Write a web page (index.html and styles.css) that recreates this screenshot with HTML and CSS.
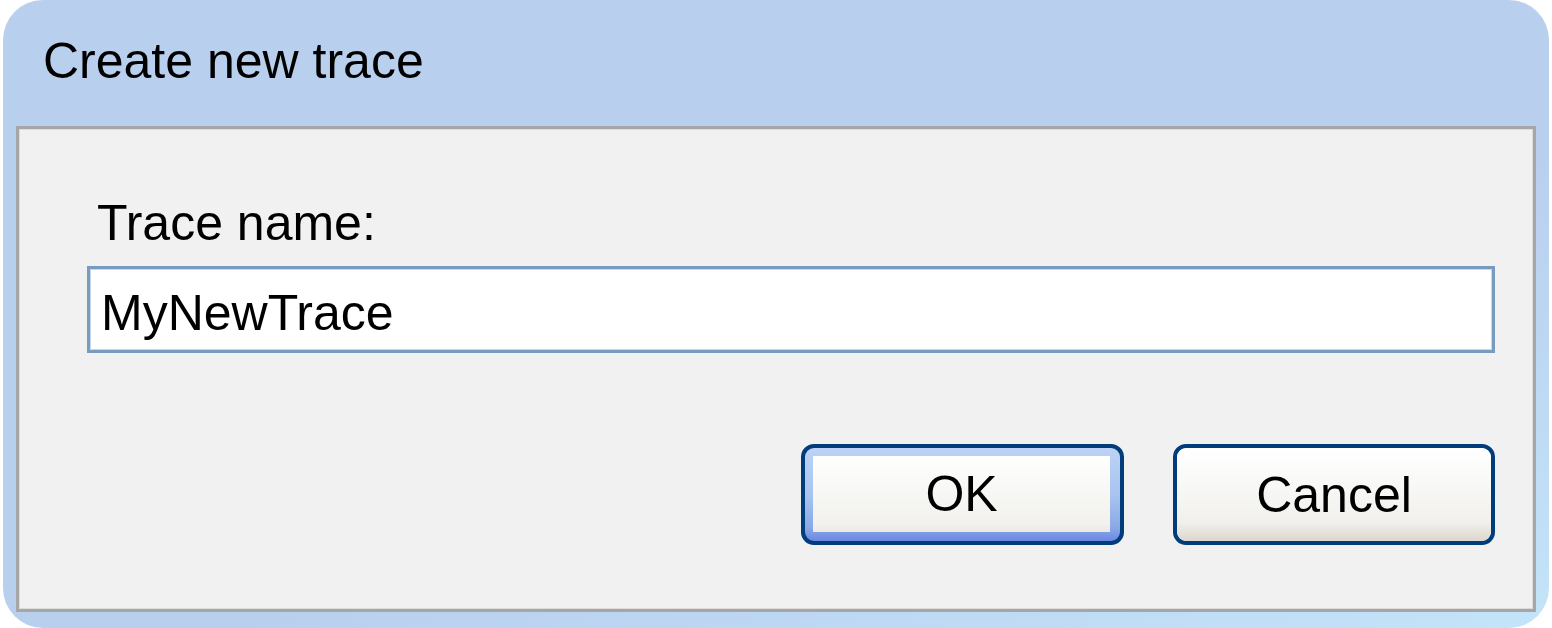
FILE: index.html
```html
<!DOCTYPE html>
<html>
<head>
<meta charset="utf-8">
<link rel="stylesheet" href="styles.css">
</head>
<body>
<div class="window">
  <div class="title">Create new trace</div>
  <div class="panel">
    <div class="content">
      <div class="label">Trace name:</div>
      <div class="input">MyNewTrace</div>
      <div class="buttons">
        <div class="btn btn-default"><span class="btn-face">OK</span></div>
        <div class="btn"><span class="btn-face">Cancel</span></div>
      </div>
    </div>
  </div>
</div>
</body>
</html>
```
FILE: styles.css
```css
html, body {
  margin: 0;
  padding: 0;
  background: #ffffff;
}
body {
  font-family: "Liberation Sans", Arial, sans-serif;
  color: #000;
}
.window {
  margin-left: 3px;
  width: 1546px;
  height: 628px;
  box-sizing: border-box;
  border-radius: 40px;
  background: linear-gradient(160deg, #b9cfee 0%, #b9cfee 60%, #c3e4f9 100%);
  display: flex;
  flex-direction: column;
  padding: 0 13px 16px 13px;
}
.title {
  height: 126px;
  box-sizing: border-box;
  padding: 34px 0 0 27px;
  font-size: 50px;
  line-height: 55px;
}
.panel {
  flex: 1;
  background: #f1f1f1;
  border: 3px solid #a6a6a6;
  box-shadow: inset 0 0 0 1px #dcdcdc;
  display: flex;
}
.content {
  margin-left: 68px;
  width: 1408px;
  display: flex;
  flex-direction: column;
  padding-top: 67px;
}
.label {
  font-size: 50px;
  line-height: 55px;
  padding-left: 10px;
}
.input {
  margin-top: 15px;
  height: 87px;
  box-sizing: border-box;
  background: #fff;
  border: 3px solid #789cc0;
  box-shadow: inset 0 0 0 1px #c9d8e8;
  font-size: 50px;
  line-height: 55px;
  padding: 17px 0 0 11px;
}
.buttons {
  margin-top: 91px;
  display: flex;
  justify-content: flex-end;
  gap: 49px;
}
.btn {
  width: 322px;
  height: 101px;
  box-sizing: border-box;
  border: 4px solid #003d7a;
  border-radius: 13px;
  background: #fff;
  display: flex;
  overflow: hidden;
}
.btn-face {
  flex: 1;
  display: flex;
  align-items: center;
  justify-content: center;
  font-size: 50px;
  background: linear-gradient(to bottom, #ffffff 0%, #f8f8f6 40%, #f1f0ec 80%, #ddd7cd 100%);
  border-radius: 9px;
}
.btn-default {
  width: 323px;
  padding: 8px 10px 9px 8px;
  background: linear-gradient(to bottom, #bcd3f4 0%, #a9c4f0 50%, #8aaae6 85%, #6c87e4 100%);
}
.btn-default .btn-face {
  border-radius: 0;
  background: linear-gradient(to bottom, #ffffff 0%, #f8f8f6 40%, #f2f1ed 90%, #ece9e2 100%);
}
```
